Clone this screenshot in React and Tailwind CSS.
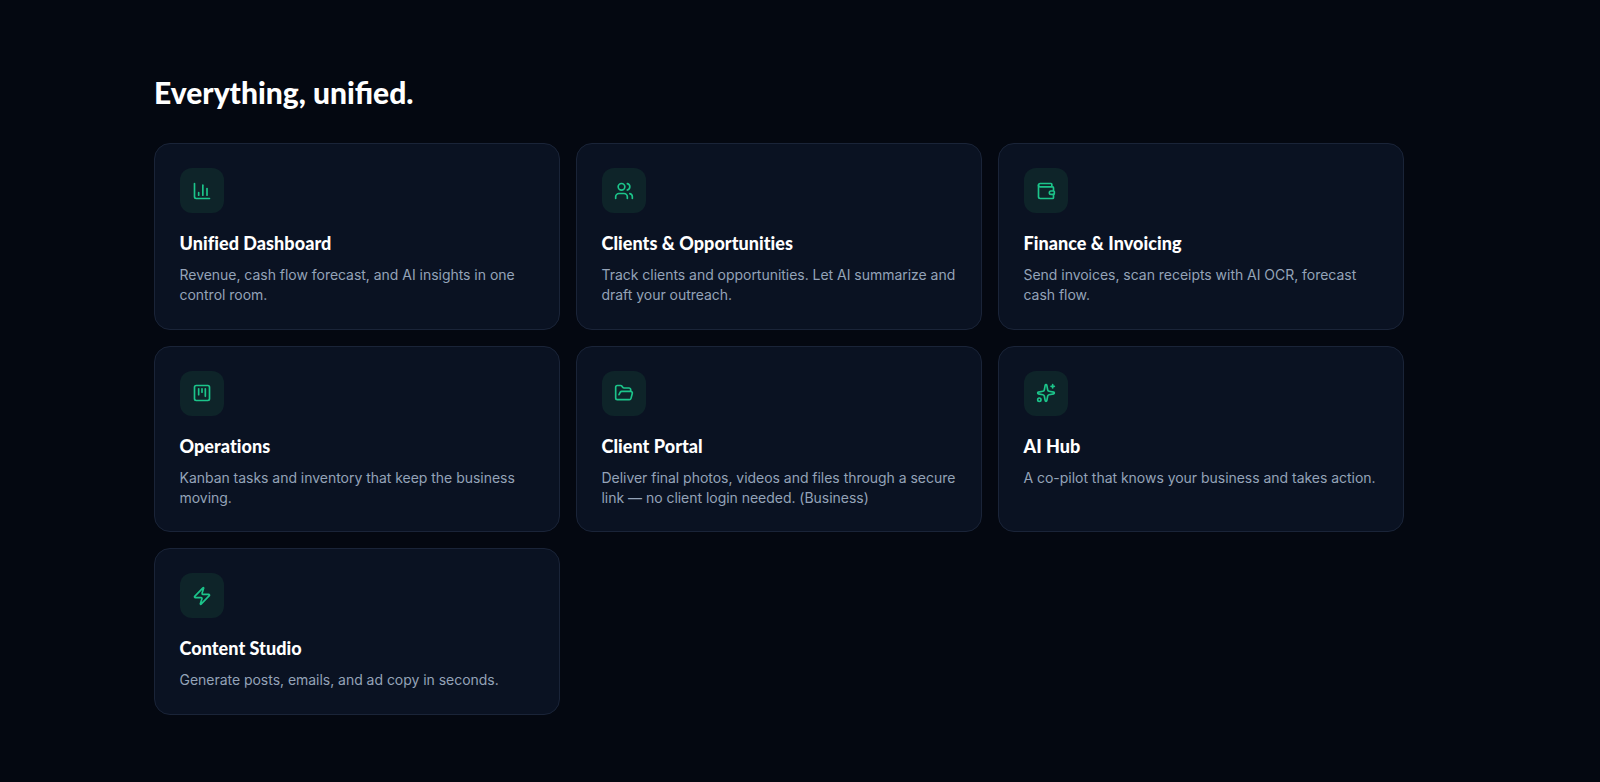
import React from "react";
import { ChartColumn, Users, Wallet, SquareKanban, FolderOpen, Sparkles, Zap } from "lucide-react";

const items = [
  { icon: ChartColumn, title: "Unified Dashboard", text: "Revenue, cash flow forecast, and AI insights in one control room." },
  { icon: Users, title: "Clients & Opportunities", text: "Track clients and opportunities. Let AI summarize and draft your outreach." },
  { icon: Wallet, title: "Finance & Invoicing", text: "Send invoices, scan receipts with AI OCR, forecast cash flow." },
  { icon: SquareKanban, title: "Operations", text: "Kanban tasks and inventory that keep the business moving." },
  { icon: FolderOpen, title: "Client Portal", text: "Deliver final photos, videos and files through a secure link — no client login needed. (Business)" },
  { icon: Sparkles, title: "AI Hub", text: "A co-pilot that knows your business and takes action." },
  { icon: Zap, title: "Content Studio", text: "Generate posts, emails, and ad copy in seconds." },
];

export default function App() {
  return (
    <div className="min-h-[782px] bg-[#040811] pl-[154px] pr-[196px] pt-[74px] font-['Inter',sans-serif]">
      <h2 className="text-[30px] leading-[36px] font-black text-white tracking-[0px] font-['Lato',sans-serif]">Everything, unified.</h2>
      <div className="mt-[33px] grid grid-cols-3 gap-4">
        {items.map(({ icon: Icon, title, text }) => (
          <div key={title} className="rounded-2xl border border-[#1a2438] bg-[#0a1222] pt-[24px] pb-[23.5px] pl-[24.5px] pr-[24px]">
            <div className="flex h-[45px] w-[44px] items-center justify-center rounded-xl bg-[#0e2429]">
              <Icon className="h-5 w-5 text-[#1cc48a]" strokeWidth={2} />
            </div>
            <h3 className="mt-[16px] text-[18px] leading-[28px] font-black text-white tracking-[0.05px] font-['Lato',sans-serif]">{title}</h3>
            <p className="mt-[8px] text-[14px] leading-[20px] tracking-[-0.03px] text-[#94a3b8]">{text}</p>
          </div>
        ))}
      </div>
    </div>
  );
}
